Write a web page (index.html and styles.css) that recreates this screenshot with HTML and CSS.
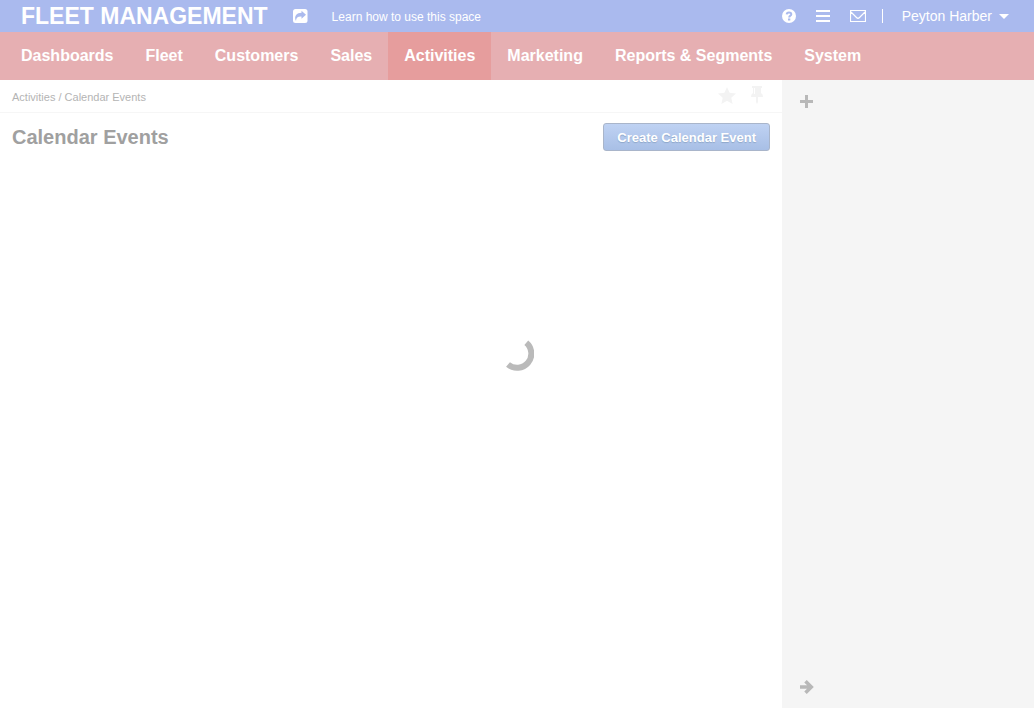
FILE: index.html
```html
<!DOCTYPE html>
<html lang="en">
<head>
<meta charset="utf-8">
<title>Calendar Events</title>
<link rel="stylesheet" href="styles.css">
</head>
<body>
<header class="topbar">
  <a class="brand" href="#">FLEET MANAGEMENT</a>
  <a class="share" href="#" aria-label="Share">
    <svg width="15" height="14" viewBox="0 0 15 14"><rect width="14.500" height="14" rx="2.500" fill="#fff"/><path d="M3 12C.5 7 4 3.800 8.500 3.800V1.800L13 5.800 8.500 9.800V7.500C5 7.300 3 8.500 3 12Z" fill="#aabaee"/></svg>
  </a>
  <a class="learn" href="#">Learn how to use this space</a>
  <div class="tools">
    <button class="icon" aria-label="Help"><svg width="14" height="14" viewBox="0 0 14 14"><circle cx="7" cy="7" r="7" fill="#fff"/><path d="M4.700 5.400C4.800 2.800 9.300 2.800 9.300 5.300C9.300 6.800 7.200 6.500 7.200 8.500" fill="none" stroke="#aabaee" stroke-width="2"/><rect x="6" y="9.500" width="2.300" height="2" fill="#aabaee"/></svg></button>
    <button class="icon" aria-label="Menu"><svg width="14" height="12" viewBox="0 0 14 12"><path d="M0 1h14M0 6h14M0 11h14" stroke="#fff" stroke-width="2"/></svg></button>
    <button class="icon" aria-label="Mail"><svg width="16" height="12" viewBox="0 0 16 12"><path d="M.5.500h15v11H.500zM1 2l5.500 5.500Q8 9 9.500 7.500L15 2" fill="none" stroke="#fff" stroke-width="1.200"/></svg></button>
  </div>
  <button class="user">Peyton Harber <svg width="10" height="5" viewBox="0 0 10 5"><path d="M0 0h10L5 5z" fill="#fff"/></svg></button>
</header>
<nav class="nav">
  <a href="#">Dashboards</a><a href="#">Fleet</a><a href="#">Customers</a><a href="#">Sales</a><a class="active" href="#">Activities</a><a href="#">Marketing</a><a href="#">Reports &amp; Segments</a><a href="#">System</a>
</nav>
<div class="body">
  <main class="main">
    <div class="crumbs">
      <span><a href="#">Activities</a> / <a href="#">Calendar Events</a></span>
      <div class="marks">
        <button class="icon" aria-label="Favorite"><svg width="18" height="17" viewBox="0 0 18 17"><path d="M9 0l2.600 5.700 6.400.700-4.700 4.300L14.600 17 9 13.800 3.400 17l1.300-6.300L0 6.400l6.400-.700z" fill="#f3f3f3"/></svg></button>
        <button class="icon" aria-label="Pin"><svg width="12" height="18" viewBox="0 0 12 18"><path d="M1 0h10v2H10v5q2 1 2 4H7v5l-1 2-1-2v-5H0q0-3 2-4V2H1z" fill="#f3f3f3"/><path d="M3.500 2v6" stroke="#fff"/></svg></button>
      </div>
    </div>
    <div class="heading">
      <h1>Calendar Events</h1>
      <button class="create">Create Calendar Event</button>
    </div>
  </main>
  <aside class="side">
    <button class="icon" aria-label="Add"><svg width="13" height="13" viewBox="0 0 13 13"><path d="M6.500 0v13M0 6.500h13" stroke="#b8b8b8" stroke-width="3"/></svg></button>
    <button class="icon" aria-label="Collapse"><svg width="14" height="14" viewBox="0 0 14 14"><path d="M0 7h11M5.500 1.200L11.300 7l-5.800 5.800" fill="none" stroke="#b8b8b8" stroke-width="3.500"/></svg></button>
  </aside>
</div>
<div class="loader" role="status" aria-label="Loading"><svg width="34" height="34" viewBox="0 0 34 34"><path d="M26.300 5.800A13 13 0 0 1 8 27.500" fill="none" stroke="#bababa" stroke-width="6"/></svg></div>
</body>
</html>
```

FILE: styles.css
```css
* { box-sizing: border-box; }
body {
  margin: 0;
  min-height: 100vh;
  display: flex;
  flex-direction: column;
  background: #fff;
  font-family: "Liberation Sans", Arial, sans-serif;
}
a { color: inherit; text-decoration: none; }
button { border: 0; padding: 0; background: none; font-family: inherit; }
svg { display: block; }
.topbar {
  display: flex;
  align-items: center;
  height: 32px;
  padding: 0 25px 0 21px;
  background: #aabaee;
  color: #fff;
}
.brand { font-size: 23px; font-weight: bold; line-height: 32px; white-space: nowrap; }
.share { margin-left: 25px; }
.learn { margin-left: 24px; font-size: 12px; line-height: 32px; padding-top: 1px; }
.tools {
  display: flex;
  align-items: center;
  gap: 20px;
  height: 14px;
  margin-left: auto;
  padding-right: 16px;
  border-right: 1px solid #fff;
}
.user { display: flex; align-items: center; gap: 7px; padding-left: 19px; color: #fff; font-size: 14px; }
.nav { display: flex; height: 48px; padding-left: 5px; background: #e6afb2; color: #fff; }
.nav a { padding: 0 16px; font-size: 16px; font-weight: bold; line-height: 47px; white-space: nowrap; }
.nav .active { background: #e69d9d; }
.body { flex: 1; display: flex; }
.main { flex: 1; }
.crumbs {
  display: flex;
  justify-content: space-between;
  height: 33px;
  padding: 0 19px 0 12px;
  border-bottom: 1px solid #f6f6f6;
  color: #b4b4b4;
  font-size: 11px;
  line-height: 34px;
}
.marks { display: flex; align-items: center; gap: 15px; height: 30px; }
.heading { display: flex; align-items: center; justify-content: space-between; padding: 10px 12px; }
h1 { margin: 0; color: #a0a0a0; font-size: 20px; line-height: 28px; }
.create {
  height: 28px;
  padding: 0 13px;
  border: 1px solid #a9b5ca;
  border-radius: 3px;
  background: linear-gradient(#bfd2f3, #a8bfe6);
  color: #fff;
  font-size: 13px;
  font-weight: bold;
  text-shadow: 0 1px 1px #8ea6c8;
}
.side {
  display: flex;
  flex-direction: column;
  align-items: flex-start;
  justify-content: space-between;
  width: 252px;
  padding: 15px 17px 14px 18px;
  background: #f5f5f5;
}
.loader { position: fixed; inset: 0; display: grid; place-items: center; pointer-events: none; }
```
